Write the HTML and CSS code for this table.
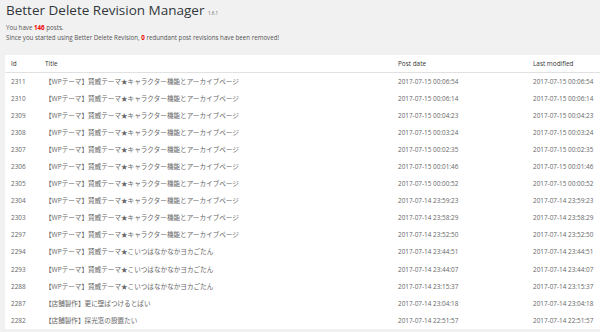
FILE: index.html
```html
<!DOCTYPE html>
<html lang="ja">
<head>
<meta charset="utf-8">
<title>Better Delete Revision Manager</title>
<link rel="stylesheet" href="styles.css">
</head>
<body>
<div class="wrap">
  <h1 class="title">Better Delete Revision Manager <span class="ver">1.6.1</span></h1>
  <p class="info">You have <strong class="num">146</strong> posts.</p>
  <p class="info">Since you started using Better Delete Revision, <strong class="num">0</strong> redundant post revisions have been removed!</p>
</div>
<table class="list">
  <colgroup>
    <col class="c-id"><col class="c-title"><col class="c-date"><col class="c-mod">
  </colgroup>
  <thead>
    <tr><th>Id</th><th>Title</th><th>Post date</th><th>Last modified</th></tr>
  </thead>
  <tbody>
    <tr><td>2311</td><td class="t">【WPテーマ】賢威テーマ★キャラクター機能とアーカイブページ</td><td>2017-07-15 00:06:54</td><td>2017-07-15 00:06:54</td></tr>
    <tr><td>2310</td><td class="t">【WPテーマ】賢威テーマ★キャラクター機能とアーカイブページ</td><td>2017-07-15 00:06:14</td><td>2017-07-15 00:06:14</td></tr>
    <tr><td>2309</td><td class="t">【WPテーマ】賢威テーマ★キャラクター機能とアーカイブページ</td><td>2017-07-15 00:04:23</td><td>2017-07-15 00:04:23</td></tr>
    <tr><td>2308</td><td class="t">【WPテーマ】賢威テーマ★キャラクター機能とアーカイブページ</td><td>2017-07-15 00:03:24</td><td>2017-07-15 00:03:24</td></tr>
    <tr><td>2307</td><td class="t">【WPテーマ】賢威テーマ★キャラクター機能とアーカイブページ</td><td>2017-07-15 00:02:35</td><td>2017-07-15 00:02:35</td></tr>
    <tr><td>2306</td><td class="t">【WPテーマ】賢威テーマ★キャラクター機能とアーカイブページ</td><td>2017-07-15 00:01:46</td><td>2017-07-15 00:01:46</td></tr>
    <tr><td>2305</td><td class="t">【WPテーマ】賢威テーマ★キャラクター機能とアーカイブページ</td><td>2017-07-15 00:00:52</td><td>2017-07-15 00:00:52</td></tr>
    <tr><td>2304</td><td class="t">【WPテーマ】賢威テーマ★キャラクター機能とアーカイブページ</td><td>2017-07-14 23:59:23</td><td>2017-07-14 23:59:23</td></tr>
    <tr><td>2303</td><td class="t">【WPテーマ】賢威テーマ★キャラクター機能とアーカイブページ</td><td>2017-07-14 23:58:29</td><td>2017-07-14 23:58:29</td></tr>
    <tr><td>2297</td><td class="t">【WPテーマ】賢威テーマ★キャラクター機能とアーカイブページ</td><td>2017-07-14 23:52:50</td><td>2017-07-14 23:52:50</td></tr>
    <tr><td>2294</td><td class="t">【WPテーマ】賢威テーマ★こいつはなかなかヨカごたん</td><td>2017-07-14 23:44:51</td><td>2017-07-14 23:44:51</td></tr>
    <tr><td>2293</td><td class="t">【WPテーマ】賢威テーマ★こいつはなかなかヨカごたん</td><td>2017-07-14 23:44:07</td><td>2017-07-14 23:44:07</td></tr>
    <tr><td>2288</td><td class="t">【WPテーマ】賢威テーマ★こいつはなかなかヨカごたん</td><td>2017-07-14 23:15:37</td><td>2017-07-14 23:15:37</td></tr>
    <tr><td>2287</td><td class="t">【店舗製作】更に壁ばつけるとばい</td><td>2017-07-14 23:04:18</td><td>2017-07-14 23:04:18</td></tr>
    <tr><td>2282</td><td class="t">【店舗製作】採光窓の設置たい</td><td>2017-07-14 22:51:57</td><td>2017-07-14 22:51:57</td></tr>
  </tbody>
</table>
</body>
</html>
```

FILE: styles.css
```css
html, body {
  margin: 0;
  padding: 0;
  background: #f1f1f1;
  overflow: hidden;
}
body {
  font-family: "Open Sans", "Noto Sans CJK JP", sans-serif;
  color: #444;
  width: 600px;
  height: 332px;
}
.wrap {
  padding: 1px 0 0 6px;
}
.title {
  margin: 0;
  font-size: 13.5px;
  font-weight: 400;
  color: #32373c;
  line-height: 18px;
}
.ver {
  font-size: 4.5px;
  color: #666;
}
.info {
  margin: 0;
  font-size: 6.2px;
  line-height: 10px;
  color: #555;
}
.info:first-of-type {
  margin-top: 1px;
}
.num {
  color: #e00;
  font-weight: 700;
}
.list {
  margin: 12px 0 0 5px;
  width: 600px;
  table-layout: fixed;
  border-collapse: collapse;
  background: #fff;
  font-size: 6.4px;
}
.c-id { width: 34px; }
.c-title { width: 353px; }
.c-date { width: 135px; }
.c-mod { width: 78px; }
.list th {
  text-align: left;
  font-weight: 400;
  color: #333;
  height: 17px;
  padding: 0 0 0 6px;
  border-bottom: 1px solid #e1e1e1;
  white-space: nowrap;
}
.list td {
  height: 17.1px;
  padding: 0 0 0 6px;
  color: #666;
  white-space: nowrap;
  line-height: 10px;
}
.list td.t {
  font-size: 6.6px;
}
```
